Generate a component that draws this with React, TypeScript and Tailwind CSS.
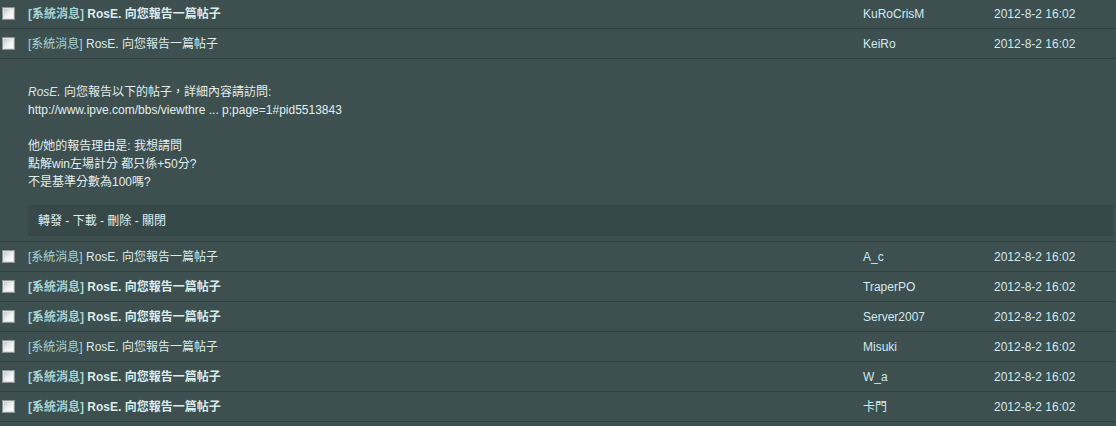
import type { FC } from 'react';

type Message = {
  id: number;
  author: string;
  date: string;
  unread: boolean;
  open?: boolean;
};

const messages: Message[] = [
  { id: 1, author: 'KuRoCrisM', date: '2012-8-2 16:02', unread: true },
  { id: 2, author: 'KeiRo', date: '2012-8-2 16:02', unread: false, open: true },
  { id: 3, author: 'A_c', date: '2012-8-2 16:02', unread: false },
  { id: 4, author: 'TraperPO', date: '2012-8-2 16:02', unread: true },
  { id: 5, author: 'Server2007', date: '2012-8-2 16:02', unread: true },
  { id: 6, author: 'Misuki', date: '2012-8-2 16:02', unread: false },
  { id: 7, author: 'W_a', date: '2012-8-2 16:02', unread: true },
  { id: 8, author: '卡門', date: '2012-8-2 16:02', unread: true },
];

const Checkbox: FC = () => (
  <span className="flex h-[13px] w-[13px] items-center justify-center border border-[#8c9494] bg-[#dfe3e3]">
    <span className="h-[9px] w-[9px] bg-gradient-to-br from-[#c4c9c9] via-[#eef0f0] to-[#ffffff]" />
  </span>
);

const Row: FC<{ msg: Message }> = ({ msg }) => (
  <div className="flex h-[30px] items-center border-b border-[#314040]">
    <div className="flex w-[28px] shrink-0 pl-[2px]">
      <Checkbox />
    </div>
    <div className={`flex-1 ${msg.unread ? 'font-bold' : ''}`}>
      <span className="text-[#a6d3d6]">[系統消息]</span>{' '}
      <span className="text-[#dcecec]">RosE. 向您報告一篇帖子</span>
    </div>
    <div className="w-[131px] shrink-0 text-[#d2eaf0]">{msg.author}</div>
    <div className="w-[122px] shrink-0 text-[#d2eaf0]">{msg.date}</div>
  </div>
);

const Detail: FC = () => (
  <div className="border-b border-[#314040] pb-[5px] pl-[28px] pr-[3px] pt-[24px]">
    <div className="leading-[18px] text-[#e2eeee]">
      <p>
        <em className="text-[#d6e6e6]">RosE.</em> 向您報告以下的帖子，詳細內容請訪問:
      </p>
      <p>http://www.ipve.com/bbs/viewthre ... p;page=1#pid5513843</p>
      <p>&nbsp;</p>
      <p>他/她的報告理由是: 我想請問</p>
      <p>點解win左場計分 都只係+50分?</p>
      <p>不是基準分數為100嗎?</p>
    </div>
    <div className="mt-[14px] flex h-[31px] items-center bg-[#374848] pl-[10px] text-[#e2eeee]">
      轉發 - 下載 - 刪除 - 關閉
    </div>
  </div>
);

export default function App() {
  return (
    <div className="h-[426px] w-[1116px] overflow-hidden bg-[#3d4f4f] text-[12px] font-['Liberation_Sans','Noto_Sans_CJK_TC',sans-serif]">
      <div className="-mt-px">
        {messages.map((msg) => (
          <div key={msg.id}>
            <Row msg={msg} />
            {msg.open && <Detail />}
          </div>
        ))}
      </div>
    </div>
  );
}
